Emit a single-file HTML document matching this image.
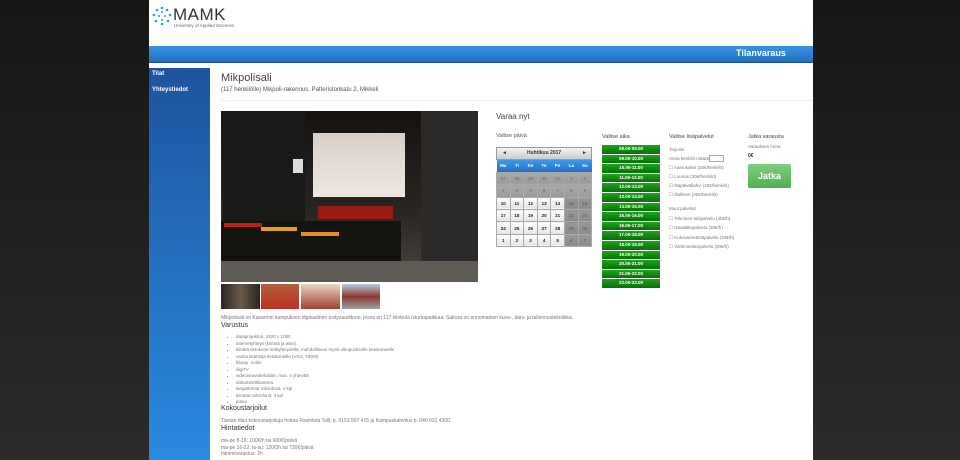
<!DOCTYPE html>
<html><head><meta charset="utf-8"><style>
*{margin:0;padding:0;box-sizing:border-box}
body{width:960px;height:460px;overflow:hidden;background:linear-gradient(#161616,#2b2b2b);font-family:"Liberation Sans",sans-serif;position:relative}
.a{position:absolute}
#page{left:149px;top:0;width:664px;height:460px;background:#fff}
.t{font-size:5px;color:#777;white-space:nowrap}
.cal td{width:13.6px;height:12.4px;font-size:4.5px;text-align:center;font-weight:bold;border:1px solid #aaa;padding:0}
.cal .g{background:linear-gradient(#aaa,#999);color:#777}
.cal .w{background:linear-gradient(#fff,#e4e4e4);color:#222}
.cal .o{background:linear-gradient(#999,#8a8a8a);color:#666}
.slot{position:absolute;left:602px;width:58px;height:8.6px;background:linear-gradient(#1ea51e,#067006);color:#fff;font-size:4.5px;font-weight:bold;text-align:center;line-height:8.6px}
li{font-size:4.5px;color:#777;margin-left:10px;height:6.5px;line-height:6.5px}
</style></head><body>
<div class="a" id="page"></div>
<svg class="a" style="left:152px;top:6px" width="20" height="20" viewBox="0 0 20 20">
<g fill="#2aa0dc"><circle cx="10" cy="2" r="1.3"/><circle cx="15" cy="4" r="1.3"/><circle cx="18" cy="9" r="1.3"/><circle cx="16" cy="15" r="1.3"/><circle cx="10" cy="18" r="1.3"/><circle cx="4" cy="15" r="1.3"/><circle cx="2" cy="9" r="1.3"/><circle cx="5" cy="4" r="1.3"/><circle cx="10" cy="6" r="1"/><circle cx="13" cy="10" r="1"/><circle cx="10" cy="14" r="1"/><circle cx="7" cy="10" r="1"/></g></svg>
<div class="a" style="left:173px;top:5px;font-size:17px;color:#333;letter-spacing:0.5px">MAMK</div>
<div class="a t" style="left:174px;top:23px;font-size:4.5px;color:#666">University of Applied Sciences</div>
<div class="a" style="left:149px;top:46px;width:664px;height:17px;background:linear-gradient(#3a95e0,#1f6fc4);border-bottom:1px solid #1a4f90"></div>
<div class="a" style="left:736px;top:48px;font-size:9px;font-weight:bold;color:#fff">Tilanvaraus</div>
<div class="a" style="left:149px;top:68px;width:61px;height:392px;background:linear-gradient(#1d549f,#2a8be0)"></div>
<div class="a" style="left:152px;top:71px;font-size:6px;font-weight:bold;color:#fff">Tilat</div>
<div class="a" style="left:152px;top:87px;font-size:6px;font-weight:bold;color:#fff">Yhteystiedot</div>
<div class="a" style="left:221px;top:72px;font-size:11px;color:#444">Mikpolisali</div>
<div class="a t" style="left:221px;top:87px;font-size:6px;color:#555">(117 henkilölle) Mikpoli-rakennus, Patteristonkatu 2, Mikkeli</div>
<div class="a" style="left:221px;top:100px;width:592px;height:1px;background:#eee"></div>
<div class="a" style="left:221px;top:111px;width:257px;height:171px;background:linear-gradient(#151210,#2a2622 60%,#4a4640);overflow:hidden">
<div class="a" style="left:2px;top:0;width:82px;height:171px;background:#1b1917"></div>
<div class="a" style="left:200px;top:0;width:57px;height:171px;background:#2c2a28"></div>
<div class="a" style="left:92px;top:22px;width:92px;height:64px;background:linear-gradient(#d8d0c8,#efe8e0)"></div>
<div class="a" style="left:72px;top:48px;width:10px;height:14px;background:#ddd"></div>
<div class="a" style="left:97px;top:95px;width:75px;height:13px;background:#9a1c14"></div>
<div class="a" style="left:0;top:110px;width:180px;height:40px;background:#151310"></div>
<div class="a" style="left:3px;top:112px;width:38px;height:4px;background:#c02010"></div>
<div class="a" style="left:40px;top:116px;width:36px;height:4px;background:#e0a020"></div>
<div class="a" style="left:80px;top:121px;width:38px;height:4px;background:#e09020"></div>
<div class="a" style="left:0;top:150px;width:257px;height:21px;background:#5e5a54"></div>
</div>
<div class="a" style="left:221px;top:284px;width:39px;height:25px;background:linear-gradient(90deg,#2a2420,#6a5a48 50%,#2a2420)"></div>
<div class="a" style="left:261px;top:284px;width:38px;height:25px;background:linear-gradient(#b06040,#c03020)"></div>
<div class="a" style="left:301px;top:284px;width:39px;height:25px;background:linear-gradient(#e8d8c0,#a04030)"></div>
<div class="a" style="left:342px;top:284px;width:38px;height:25px;background:linear-gradient(#b8c8e0,#8a3a30 50%,#a0a0a0)"></div>
<div class="a t" style="left:221px;top:315px">Mikpolisali on Kasarmin kampuksen digitaalinen esitysauditorio, jossa on 117 kiinteää istumapaikkaa. Salissa on erinomainen kuva-, ääni- ja tallennustekniikka.</div>
<div class="a" style="left:221px;top:322px;font-size:7px;color:#333">Varustus</div>
<ul class="a" style="left:226px;top:334px;list-style:disc">
<li>dataprojektori, 1920 x 1080</li><li>internetyhteys (kiinteä ja wlan)</li><li>kiinteä tietokone nettiyhteydellä, mahdollisuus myös ulkopuoliselle tietokoneelle</li><li>useita liitäntöjä tietokoneille (VGA, HDMI)</li><li>bluray -soitin</li><li>digiTV</li><li>videoneuvottelulaite, max. 4 yhteyttä</li><li>dokumenttikamera</li><li>langattomat mikrofonit, 4 kpl</li><li>kiinteät mikrofonit, 3 kpl</li><li>piano</li></ul>
<div class="a" style="left:221px;top:405px;font-size:7px;color:#333">Kokoustarjoilut</div>
<div class="a t" style="left:221px;top:418px">Tämän tilan kokoustarjoiluja hoitaa Ravintola Talli, p. 0153 507 415 ja Kampuskahvitus p. 040 631 4300.</div>
<div class="a" style="left:221px;top:425px;font-size:7px;color:#333">Hintatiedot</div>
<div class="a t" style="left:221px;top:438px;line-height:6.5px">ma-pe 8-16: 100€/h tai 600€/päivä<br>ma-pe 16-22, la-su: 120€/h tai 730€/päivä<br>minimivarastus: 2h</div>
<div class="a" style="left:496px;top:112px;font-size:8px;color:#444">Varaa nyt</div>
<div class="a t" style="left:496px;top:133px;font-size:5.5px;color:#555">Valitse päivä</div>
<div class="a" style="left:496px;top:147px;width:96px;height:13px;background:linear-gradient(#f4f4f4,#ccc);border:1px solid #999;font-size:5px;font-weight:bold;color:#333;line-height:11px">
<span style="position:absolute;left:5px">◄</span><span style="position:absolute;left:30px">Huhtikuu 2017</span><span style="position:absolute;right:4px">►</span></div>
<table class="a cal" style="left:496px;top:160px;border-collapse:collapse">
<tr style="background:linear-gradient(#3e9ae8,#1e6ec8);color:#fff"><td style="height:10px;border:0;color:#fff">Ma</td><td style="border:0;color:#fff">Ti</td><td style="border:0;color:#fff">Ke</td><td style="border:0;color:#fff">To</td><td style="border:0;color:#fff">Pe</td><td style="border:0;color:#fff">La</td><td style="border:0;color:#fff">Su</td></tr>
<tr><td class="g">27</td><td class="g">28</td><td class="g">29</td><td class="g">30</td><td class="g">31</td><td class="g">1</td><td class="g">2</td></tr>
<tr><td class="g">3</td><td class="g">4</td><td class="g">5</td><td class="g">6</td><td class="g">7</td><td class="g">8</td><td class="g">9</td></tr>
<tr><td class="w">10</td><td class="w">11</td><td class="w">12</td><td class="w">13</td><td class="w">14</td><td class="o">15</td><td class="o">16</td></tr>
<tr><td class="w">17</td><td class="w">18</td><td class="w">19</td><td class="w">20</td><td class="w">21</td><td class="o">22</td><td class="o">23</td></tr>
<tr><td class="w">24</td><td class="w">25</td><td class="w">26</td><td class="w">27</td><td class="w">28</td><td class="o">29</td><td class="o">30</td></tr>
<tr><td class="w">1</td><td class="w">2</td><td class="w">3</td><td class="w">4</td><td class="w">5</td><td class="o">6</td><td class="o">7</td></tr>
</table>
<div class="a t" style="left:602px;top:134px;font-size:5.5px;color:#444">Valitse aika</div>
<div class="slot" style="top:145px">08.00-09.00</div><div class="slot" style="top:154.6px">09.00-10.00</div><div class="slot" style="top:164.2px">10.00-11.00</div><div class="slot" style="top:173.8px">11.00-12.00</div><div class="slot" style="top:183.4px">12.00-13.00</div><div class="slot" style="top:193px">13.00-14.00</div><div class="slot" style="top:202.6px">14.00-15.00</div><div class="slot" style="top:212.2px">15.00-16.00</div><div class="slot" style="top:221.8px">16.00-17.00</div><div class="slot" style="top:231.4px">17.00-18.00</div><div class="slot" style="top:241px">18.00-19.00</div><div class="slot" style="top:250.6px">19.00-20.00</div><div class="slot" style="top:260.2px">20.00-21.00</div><div class="slot" style="top:269.8px">21.00-22.00</div><div class="slot" style="top:279.4px">22.00-23.00</div>
<div class="a t" style="left:669px;top:134px;font-size:5.5px;color:#444">Valitse lisäpalvelut</div>
<div class="a t" style="left:669px;top:145px;font-size:4.5px;line-height:9px">Tarjoilut<br>Anna henkilö määrä<span style="display:inline-block;width:15px;height:7px;border:1px solid #aaa;vertical-align:middle"></span><br>☐ Aamukahvi (20€/henkilö)<br>☐ Lounas (30€/henkilö)<br>☐ Iltapäiväkahvi (20€/henkilö)<br>☐ Illallinen (30€/henkilö)</div>
<div class="a t" style="left:669px;top:204px;font-size:4.5px;line-height:9.5px">Muut palvelut<br>☐ Tekninen tukipalvelu (40€/h)<br>☐ Naulakkopalvelu (30€/h)<br>☐ Kokousemäntäpalvelu (30€/h)<br>☐ Vahtimestaripalvelu (30€/h)</div>
<div class="a t" style="left:748px;top:134px;font-size:5.5px;color:#444">Jatka varausta</div>
<div class="a t" style="left:748px;top:144px;font-size:4.5px">Varauksen hinta:</div>
<div class="a" style="left:748px;top:153px;font-size:5px;font-weight:bold;color:#333">0€</div>
<div class="a" style="left:748px;top:164px;width:43px;height:24px;border-radius:2px;background:linear-gradient(#7fcf7f,#4fae4f);color:#fff;font-weight:bold;font-size:9px;text-align:center;line-height:24px">Jatka</div>
</body></html>
